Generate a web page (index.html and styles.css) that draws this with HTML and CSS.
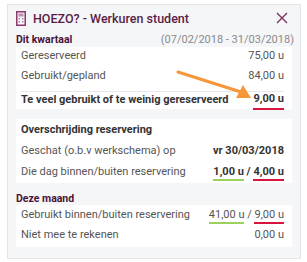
FILE: index.html
```html
<html>
<head>
	<link rel="stylesheet" href="styles.css">
	<title>HOEZO? - Werkuren student</title>
</head>
<body>
	<div class="card">
		<div class="head">
			<svg class="calc" width="10" height="15" viewBox="0 0 10 15">
				<rect x="0.75" y="0.75" width="8.5" height="13.5" fill="none" stroke="#8a3a6c" stroke-width="1.5"/>
				<rect x="2.5" y="2.5" width="5" height="3" fill="#8a3a6c" opacity="0.55"/>
				<rect x="2.5" y="7" width="1.5" height="1.5" fill="#8a3a6c" opacity="0.6"/>
				<rect x="6" y="7" width="1.5" height="1.5" fill="#8a3a6c" opacity="0.6"/>
				<rect x="2.5" y="10" width="1.5" height="1.5" fill="#8a3a6c" opacity="0.6"/>
				<rect x="6" y="10" width="1.5" height="1.5" fill="#8a3a6c" opacity="0.6"/>
			</svg>
			<span class="title">HOEZO? - Werkuren student</span>
			<svg class="close" width="12" height="12" viewBox="0 0 12 12">
				<path d="M1 1 L11 11 M11 1 L1 11" stroke="#7a2a5c" stroke-width="1.3" fill="none"/>
			</svg>
		</div>

		<div class="label">
			<b>Dit kwartaal</b>
			<span class="period">(07/02/2018 - 31/03/2018)</span>
		</div>
		<div class="box first">
			<div class="row"><span>Gereserveerd</span><span>75,00 u</span></div>
			<div class="row"><span>Gebruikt/gepland</span><span>84,00 u</span></div>
			<div class="row total"><span>Te veel gebruikt of te weinig gereserveerd</span><span class="bad">9,00 u</span></div>
		</div>

		<div class="box second">
			<div class="row strong"><span>Overschrijding reservering</span></div>
			<div class="row"><span>Geschat (o.b.v werkschema) op</span><span class="strong">vr 30/03/2018</span></div>
			<div class="row"><span>Die dag binnen/buiten reservering</span><span class="strong"><span class="good">1,00 u</span> / <span class="bad">4,00 u</span></span></div>
		</div>

		<div class="label month">
			<b>Deze maand</b>
		</div>
		<div class="box third">
			<div class="row"><span>Gebruikt binnen/buiten reservering</span><span><span class="good">41,00 u</span> / <span class="bad">9,00 u</span></span></div>
			<div class="row"><span>Niet mee te rekenen</span><span>0,00 u</span></div>
		</div>
	</div>

	<!-- arrow pointing at the total -->
	<svg class="arrow" width="307" height="262" viewBox="0 0 307 262">
		<path d="M178 72 L241 92" stroke="#f7963a" stroke-width="3" stroke-linecap="round" fill="none"/>
		<path d="M251 98 L236 98 L243 85 Z" fill="#f7963a"/>
	</svg>
</body>
</html>
```

FILE: styles.css
```css
body {
	margin: 0;
	position: relative;
	background-color: #fff;
	font-family: Roboto, "Liberation Sans", sans-serif;
	font-size: 11px;
	color: #555;
}

.card {
	margin: 4px 0 0 7px;
	width: 294px;
	height: 255px;
	box-sizing: border-box;
	background-color: #f5f6f8;
	border: 1px solid #e3e5e9;
	padding: 0 8px;
}

.head {
	display: flex;
	align-items: center;
	height: 24px;
	padding-top: 1px;
}

.calc {
	margin-right: 7px;
}

.title {
	flex: 1;
	font-size: 12.5px;
	font-weight: 500;
	color: #5b1d46;
}

.close {
	margin-right: 4px;
}

.label {
	display: flex;
	justify-content: space-between;
	align-items: center;
	height: 16px;
	padding-top: 1px;
}

.label b {
	font-size: 10.5px;
	color: #4a1238;
}

.period {
	color: #8a8a8a;
	margin-right: -2px;
}

.box {
	background-color: #fff;
	padding: 0 8px 0 5px;
}

.row {
	display: flex;
	justify-content: space-between;
	align-items: center;
	height: 20px;
	line-height: 17px;
	padding-bottom: 3px;
	box-sizing: border-box;
}

.first .total {
	margin-top: 4px;
	border-top: 1px solid #e6e8ec;
	height: 18px;
	padding-bottom: 2px;
	font-weight: bold;
	color: #333;
}

.second {
	margin-top: 10px;
	padding-bottom: 1px;
}

.second .row {
	height: 21px;
	padding-bottom: 0;
}

.strong {
	font-weight: bold;
	color: #333;
}

.month {
	margin-top: 8px;
	height: 14px;
	padding-top: 0;
}

.third {
	padding-bottom: 2px;
}

.third .row {
	padding-bottom: 2px;
}

.good {
	border-bottom: 2px solid #9ccf5b;
	padding-bottom: 1px;
}

.bad {
	border-bottom: 2px solid #d6163f;
	padding-bottom: 1px;
}

.arrow {
	position: absolute;
	left: 0;
	top: 0;
}
```
